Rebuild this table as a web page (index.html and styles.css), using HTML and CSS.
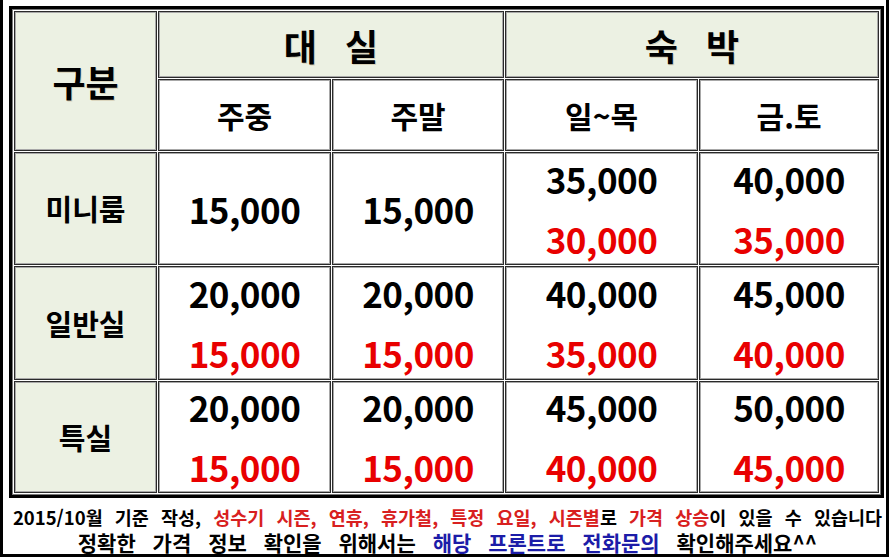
FILE: index.html
```html
<!DOCTYPE html>
<html lang="ko">
<head>
<meta charset="utf-8">
<link rel="stylesheet" href="styles.css">
</head>
<body>
<div class="page">
  <div class="frame">
    <table class="price">
      <colgroup>
        <col class="c1"><col class="c2"><col class="c3"><col class="c4"><col class="c5">
      </colgroup>
      <tr class="r1">
        <th class="head big" rowspan="2">구분</th>
        <th class="head big wide" colspan="2">대 실</th>
        <th class="head big wide" colspan="2">숙 박</th>
      </tr>
      <tr class="r2">
        <th class="sub">주중</th>
        <th class="sub">주말</th>
        <th class="sub">일~목</th>
        <th class="sub">금.토</th>
      </tr>
      <tr class="r3">
        <th class="head label">미니룸</th>
        <td><span class="num">15,000</span></td>
        <td><span class="num">15,000</span></td>
        <td><span class="num">35,000</span><span class="num red">30,000</span></td>
        <td><span class="num">40,000</span><span class="num red">35,000</span></td>
      </tr>
      <tr class="r4">
        <th class="head label">일반실</th>
        <td><span class="num">20,000</span><span class="num red">15,000</span></td>
        <td><span class="num">20,000</span><span class="num red">15,000</span></td>
        <td><span class="num">40,000</span><span class="num red">35,000</span></td>
        <td><span class="num">45,000</span><span class="num red">40,000</span></td>
      </tr>
      <tr class="r5">
        <th class="head label">특실</th>
        <td><span class="num">20,000</span><span class="num red">15,000</span></td>
        <td><span class="num">20,000</span><span class="num red">15,000</span></td>
        <td><span class="num">45,000</span><span class="num red">40,000</span></td>
        <td><span class="num">50,000</span><span class="num red">45,000</span></td>
      </tr>
    </table>
  </div>
  <p class="note n1">2015/10월 기준 작성, <span class="warn">성수기 시즌, 연휴, 휴가철, 특정 요일, 시즌별</span>로 <span class="warn">가격 상승</span>이 있을 수 있습니다</p>
  <p class="note n2">정확한 가격 정보 확인을 위해서는 <span class="info">해당 프론트로 전화문의</span> 확인해주세요^^</p>
</div>
</body>
</html>
```
FILE: styles.css
```css
html, body {
  margin: 0;
  padding: 0;
  background: #fff;
}
body {
  font-family: "Noto Sans CJK KR", "Noto Sans", sans-serif;
  color: #000;
}
.page {
  box-sizing: border-box;
  width: 889px;
  height: 557px;
  border: 3px solid #000;
  border-top: 0;
  padding: 6px 0 0 6px;
}
.frame {
  width: 869px;
  border: 3px solid #000;
}
.price {
  border: 1px solid #777;
  border-spacing: 1px;
  table-layout: fixed;
  width: 869px;
}
.c1 { width: 143px; }
.c2 { width: 173px; }
.c3 { width: 172px; }
.c4 { width: 193px; }
.c5 { width: 180px; }
.price th, .price td {
  border: 1px solid #2a2a2a;
  box-shadow: inset 0 0 0 1px #a8a8a8;
  padding: 0;
  text-align: center;
  vertical-align: middle;
  background: #fff;
  font-weight: 700;
}
.price .head {
  background: #ecf1e3;
}
.r1 { height: 67px; }
.r2 { height: 72px; }
.r3 { height: 113px; }
.r4 { height: 114px; }
.r5 { height: 112px; }
.big {
  font-size: 36px;
  line-height: 1;
  text-shadow: 1px 1px 0 #d8d2b8;
}
.wide {
  word-spacing: 18px;
}
.sub {
  font-size: 30px;
  line-height: 1;
}
.label {
  font-size: 29px;
  line-height: 1;
}
.num {
  display: block;
  font-size: 35px;
  line-height: 44px;
  font-weight: 700;
  letter-spacing: -0.5px;
}
.num + .num {
  margin-top: 16px;
}
.num.red {
  color: #e80000;
}
.note {
  margin: 0;
  font-weight: 700;
  text-align: center;
  white-space: nowrap;
}
.n1 {
  margin-top: 8px;
  font-size: 18.5px;
  line-height: 22px;
  word-spacing: 7px;
}
.n2 {
  margin-top: 2px;
  font-size: 21px;
  line-height: 24px;
  word-spacing: 11px;
}
.warn { color: #d82020; }
.info { color: #1c1ca8; }
```
